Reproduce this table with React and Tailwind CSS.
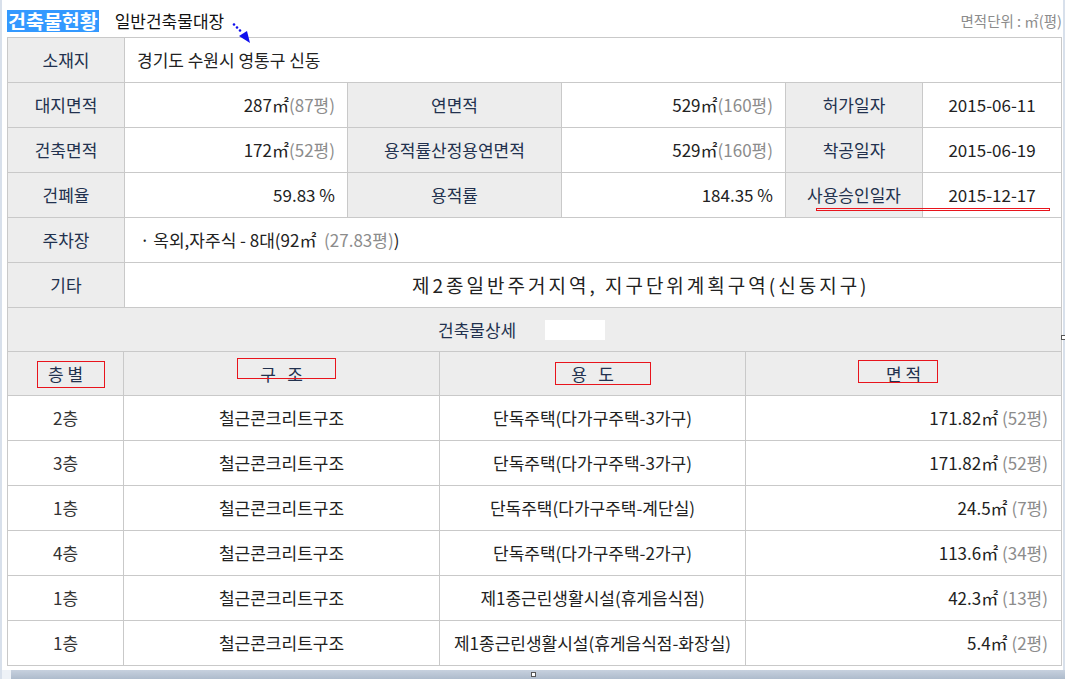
import React from "react";

const F = { fontFamily: '"Noto Sans CJK KR", "Noto Sans", sans-serif' };

function Label({ children, className = "", ...rest }) {
  return (
    <td {...rest} className={`border border-[#c9c9c9] bg-[#ededed] text-center text-[17px] text-[#22314e] ${className}`}>
      {children}
    </td>
  );
}

function Area({ m, p }) {
  return (
    <td className="border border-[#c9c9c9] bg-white pr-[12px] text-right text-[17px] text-[#222]">
      {m}㎡<span className="text-[#8c8c8c]">({p}평)</span>
    </td>
  );
}

function Val({ children, className = "", ...rest }) {
  return (
    <td {...rest} className={`border border-[#c9c9c9] bg-white text-[17px] text-[#222] ${className}`}>
      {children}
    </td>
  );
}

const floors = [
  ["2층", "단독주택(다가구주택-3가구)", "171.82", "52"],
  ["3층", "단독주택(다가구주택-3가구)", "171.82", "52"],
  ["1층", "단독주택(다가구주택-계단실)", "24.5", "7"],
  ["4층", "단독주택(다가구주택-2가구)", "113.6", "34"],
  ["1층", "제1종근린생활시설(휴게음식점)", "42.3", "13"],
  ["1층", "제1종근린생활시설(휴게음식점-화장실)", "5.4", "2"],
];

export default function App() {
  return (
    <div className="relative h-[679px] w-[1065px] overflow-hidden bg-[#d8e0eb]" style={F}>
      {/* paper */}
      <div className="ml-[2px] h-[670px] w-[1061px] bg-white">
        {/* heading */}
        <div className="flex h-[37px] items-end pl-[5px] pb-[5px]">
          <span className="bg-[#3399ff] px-[1px] text-[19.5px] font-bold leading-[22px] text-white">건축물현황</span>
          <span className="ml-[16px] text-[17px] leading-[22px] text-[#111]">일반건축물대장</span>
          <span className="ml-auto mr-[1px] mb-[1px] text-[14.5px] leading-[20px] text-[#8c8c8c]">면적단위 : ㎡(평)</span>
        </div>

        <div className="ml-[5px]">
          <table className="w-[1055px] table-fixed border-collapse">
            <colgroup>
              <col className="w-[117px]" />
              <col className="w-[223px]" />
              <col className="w-[214px]" />
              <col className="w-[224px]" />
              <col className="w-[137px]" />
              <col className="w-[139px]" />
            </colgroup>
            <tbody>
              <tr className="h-[45px]">
                <Label>소재지</Label>
                <Val className="pl-[12px]" colSpan={5}>경기도 수원시 영통구 신동</Val>
              </tr>
              <tr className="h-[45px]">
                <Label>대지면적</Label>
                <Area m="287" p="87" />
                <Label>연면적</Label>
                <Area m="529" p="160" />
                <Label>허가일자</Label>
                <Val className="text-center">2015-06-11</Val>
              </tr>
              <tr className="h-[45px]">
                <Label>건축면적</Label>
                <Area m="172" p="52" />
                <Label>용적률산정용연면적</Label>
                <Area m="529" p="160" />
                <Label>착공일자</Label>
                <Val className="text-center">2015-06-19</Val>
              </tr>
              <tr className="h-[45px]">
                <Label>건폐율</Label>
                <Val className="pr-[12px] text-right">59.83 %</Val>
                <Label>용적률</Label>
                <Val className="pr-[12px] text-right">184.35 %</Val>
                <Label>사용승인일자</Label>
                <Val className="text-center">2015-12-17</Val>
              </tr>
              <tr className="h-[45px]">
                <Label>주차장</Label>
                <Val colSpan={5} className="whitespace-pre pl-[15px]">
                  · 옥외,자주식 - 8대(92㎡  <span className="text-[#8c8c8c]">(27.83평)</span>)
                </Val>
              </tr>
              <tr className="h-[45px]">
                <Label>기타</Label>
                <td colSpan={5} className="border border-[#c9c9c9] bg-white pl-[287px] text-[19px] tracking-[3px] text-[#222]">
                  제2종일반주거지역, 지구단위계획구역(신동지구)
                </td>
              </tr>
              <tr className="h-[44px]">
                <td colSpan={6} className="border border-[#c9c9c9] bg-[#ededed] text-[17px] text-[#22314e]">
                  <div className="flex items-center pl-[430px]">
                    <span>건축물상세</span>
                    <span className="ml-[29px] inline-block h-[20px] w-[60px] bg-white" />
                  </div>
                </td>
              </tr>
            </tbody>
          </table>

          <table className="-mt-px w-[1055px] table-fixed border-collapse">
            <colgroup>
              <col className="w-[116px]" />
              <col className="w-[316px]" />
              <col className="w-[306px]" />
              <col className="w-[316px]" />
            </colgroup>
            <tbody>
              <tr className="h-[44px]">
                <Label className="whitespace-pre">층 별</Label>
                <Label className="whitespace-pre">구   조</Label>
                <Label className="whitespace-pre">용   도</Label>
                <Label className="whitespace-pre">면 적</Label>
              </tr>
              {floors.map(([f, use, m, p], i) => (
                <tr key={i} className="h-[45px]">
                  <Val className="text-center text-[#333]">{f}</Val>
                  <Val className="text-center">철근콘크리트구조</Val>
                  <Val className="text-center">{use}</Val>
                  <Val className="pr-[13px] text-right">
                    {m}㎡ <span className="text-[#8c8c8c]">({p}평)</span>
                  </Val>
                </tr>
              ))}
            </tbody>
          </table>
        </div>
      </div>

      {/* bottom shadow band */}
      <div className="absolute bottom-0 left-[11px] right-0 h-[9px] bg-gradient-to-b from-[#c7d1de] to-[#aebbcc]" />
      <div className="absolute bottom-0 left-[2px] h-[9px] w-[9px] bg-[#eef2f7]" />

      {/* arrow annotation */}
      <svg className="absolute left-[228px] top-[18px]" width="26" height="28" viewBox="228 18 26 28">
        <circle cx="234" cy="24.5" r="1.3" fill="#1010ee" />
        <circle cx="237" cy="27.5" r="1.3" fill="#1010ee" />
        <circle cx="240" cy="30.5" r="1.3" fill="#1010ee" />
        <polygon points="239,36 247,31 250,43" fill="#1010ee" />
      </svg>

      {/* red annotation boxes */}
      <div className="absolute left-[37px] top-[361px] h-[27px] w-[68px] border border-[#e8141c]" />
      <div className="absolute left-[237px] top-[358px] h-[21px] w-[99px] border border-[#e8141c]" />
      <div className="absolute left-[555px] top-[362px] h-[23px] w-[96px] border border-[#e8141c]" />
      <div className="absolute left-[858px] top-[360px] h-[23px] w-[80px] border border-[#e8141c]" />
      <div className="absolute left-[816px] top-[208px] h-[3px] w-[234px] border border-[#e8141c]" />

      {/* resize handles */}
      <div className="absolute left-[531px] top-[672px] h-[5px] w-[5px] border border-[#555] bg-white" />
      <div className="absolute left-[1061px] top-[335px] h-[5px] w-[5px] border border-[#555] bg-white" />
    </div>
  );
}
